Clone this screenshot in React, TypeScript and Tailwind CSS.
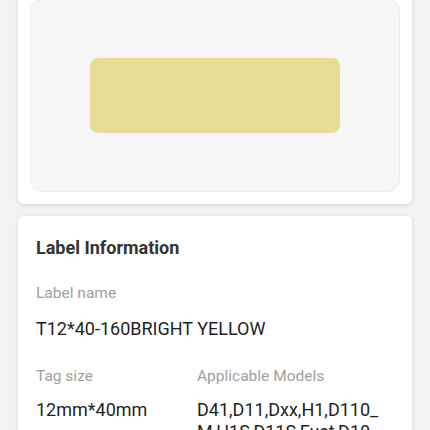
const ROWS = [
  { label: "Tag size", value: "12mm*40mm" },
  { label: "Applicable Models", value: "D41,D11,Dxx,H1,D110_M,H1S,D11S,Fust,D10 D101,D11_H" },
];

export default function App() {
  return (
    <div className="h-[430px] overflow-hidden bg-[#f2f2f2] px-[18px] font-['Roboto',sans-serif]">
      <div className="-mt-[13px] rounded-[6px] bg-white p-3 shadow-[0_1px_4px_rgba(0,0,0,0.12)]">
        <div className="flex h-[193px] items-center justify-center rounded-[12px] border border-[#ececec] bg-[#f6f6f7]">
          <div className="h-[75px] w-[250px] rounded-[8px] bg-[#e6dc94]" />
        </div>
      </div>

      <div className="mt-3 rounded-[6px] bg-white px-[18px] pt-[21px] pb-6 shadow-[0_1px_4px_rgba(0,0,0,0.12)]">
        <h2 className="text-[18px] font-bold leading-[22px] text-[#333]">Label Information</h2>
        <p className="mt-[24px] text-[15.5px] leading-[20px] text-[#a0a0a0]">Label name</p>
        <p className="mt-[15px] text-[18px] leading-[22px] text-[#1f1f1f]">T12*40-160BRIGHT YELLOW</p>
        <div className="mt-[26px] grid grid-cols-[161px_1fr]">
          {ROWS.map((row) => (
            <div key={row.label}>
              <p className="text-[15.5px] leading-[20px] text-[#a0a0a0]">{row.label}</p>
              <p className="mt-[13px] max-w-[186px] break-all text-[18px] leading-[22px] text-[#1f1f1f]">{row.value}</p>
            </div>
          ))}
        </div>
      </div>
    </div>
  );
}
